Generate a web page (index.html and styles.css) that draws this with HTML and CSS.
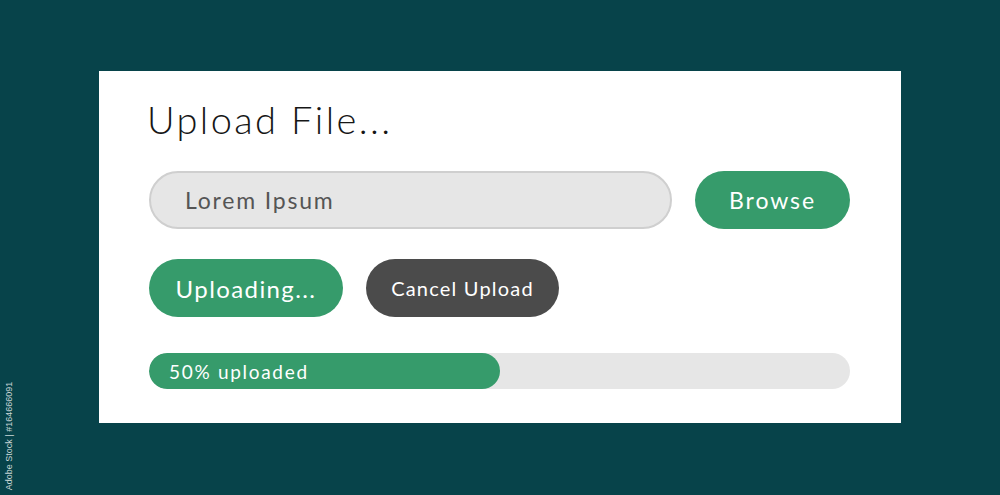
FILE: index.html
```html
<!DOCTYPE html>
<html>
<head>
<meta charset="utf-8">
<link rel="stylesheet" href="styles.css">
</head>
<body>
<div class="card">
  <h1 class="title">Upload File...</h1>
  <div class="row">
    <div class="input">Lorem Ipsum</div>
    <button class="btn btn-green btn-browse">Browse</button>
  </div>
  <div class="row row-actions">
    <button class="btn btn-green btn-uploading">Uploading...</button>
    <button class="btn btn-dark btn-cancel">Cancel Upload</button>
  </div>
  <div class="progress">
    <div class="progress-fill" style="width:50%">50% uploaded</div>
  </div>
</div>
<div class="stock-id">Adobe Stock | #164666091</div>
</body>
</html>
```

FILE: styles.css
```css
html, body {
  margin: 0;
  padding: 0;
}
body {
  width: 1000px;
  height: 495px;
  background: #07434a;
  padding: 71px 0 0 99px;
  box-sizing: border-box;
  font-family: "Lato", "Noto Sans", sans-serif;
  position: relative;
  overflow: hidden;
}
.card {
  width: 802px;
  height: 352px;
  background: #ffffff;
  box-sizing: border-box;
  padding: 29px 51px 0 50px;
  display: flex;
  flex-direction: column;
}
.title {
  margin: 0 0 33px -2px;
  font-size: 38px;
  line-height: 38px;
  font-weight: 300;
  color: #161616;
  letter-spacing: 2.4px;
}
.row {
  display: flex;
  align-items: center;
  gap: 23px;
}
.row-actions {
  margin-top: 30px;
}
.input {
  width: 523px;
  height: 58px;
  box-sizing: border-box;
  border: 2px solid #cfcfcf;
  background: #e6e6e6;
  border-radius: 29px;
  padding-left: 34px;
  display: flex;
  align-items: center;
  font-size: 23px;
  font-weight: 400;
  letter-spacing: 1.8px;
  color: #555555;
}
.btn {
  height: 58px;
  border: none;
  border-radius: 29px;
  color: #ffffff;
  font-family: inherit;
  padding: 0;
  display: flex;
  align-items: center;
  justify-content: center;
}
.btn-green {
  background: #369b6b;
}
.btn-dark {
  background: #4b4b4b;
}
.btn-browse {
  width: 155px;
  font-size: 23px;
  letter-spacing: 1.9px;
}
.btn-uploading {
  width: 194px;
  font-size: 24px;
  letter-spacing: 1.4px;
}
.btn-cancel {
  width: 193px;
  font-size: 20px;
  letter-spacing: 1.2px;
}
.progress {
  margin-top: 36px;
  height: 36px;
  width: 701px;
  background: #e6e6e6;
  border-radius: 18px;
  overflow: hidden;
}
.progress-fill {
  height: 100%;
  background: #369b6b;
  border-radius: 18px;
  color: #ffffff;
  font-size: 19px;
  letter-spacing: 1.7px;
  display: flex;
  align-items: center;
  padding-left: 20px;
  box-sizing: border-box;
}
.stock-id {
  position: absolute;
  left: 9px;
  top: 436px;
  transform: translate(-50%, -50%) rotate(-90deg);
  font-size: 9px;
  color: #c9d6d6;
  white-space: nowrap;
  font-family: "Liberation Sans", sans-serif;
}
```
